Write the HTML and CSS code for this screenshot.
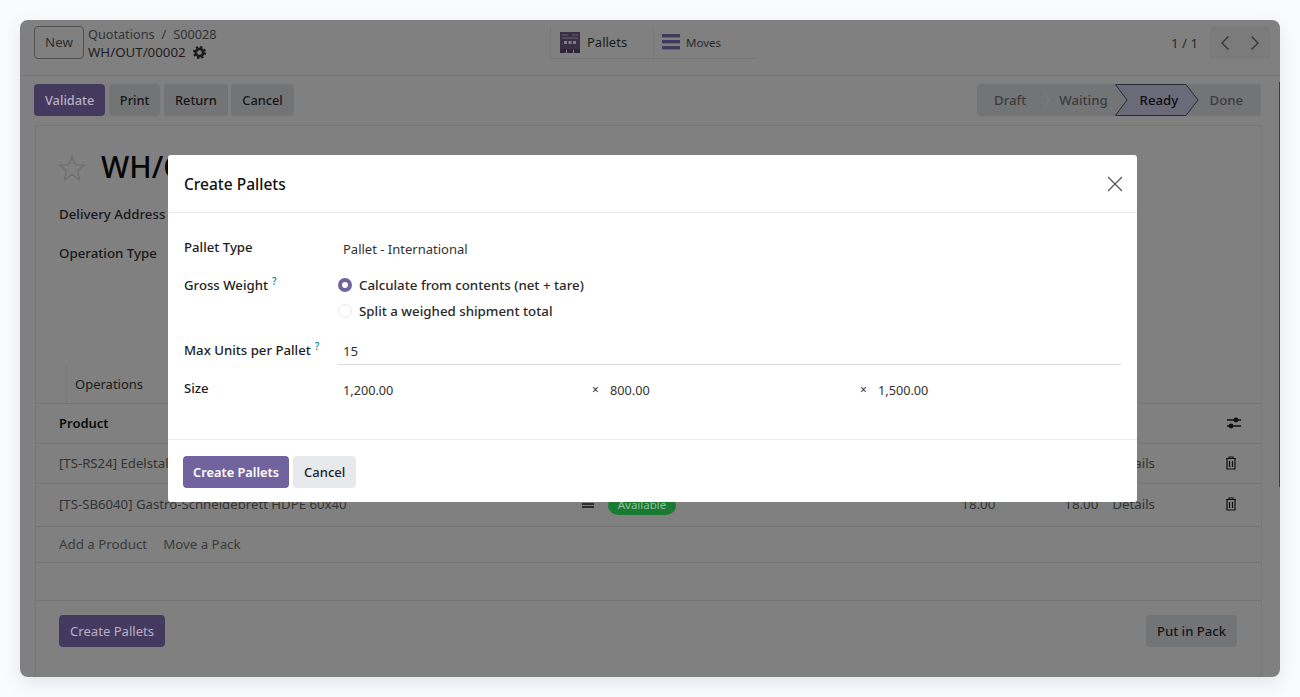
FILE: index.html
```html
<!DOCTYPE html>
<html lang="en">
<head>
    <meta charset="UTF-8">
    <meta name="viewport" content="width=device-width, initial-scale=1.0">
    <title>WH/OUT/00002</title>
    <link rel="stylesheet" href="styles.css">
</head>
<body>

<div class="window">
    <div class="control-top">
        <div class="control-left">
            <div class="btn-new">New</div>
            <div class="crumbs">
                <div class="crumb-path">Quotations<span class="crumb-sep">/</span>S00028</div>
                <div class="crumb-current">WH/OUT/00002
                    <svg class="gear" viewBox="0 0 14 14" width="13" height="13">
                        <circle cx="7" cy="7" r="4" fill="none" stroke="#1c1c1c" stroke-width="3"/>
                        <circle cx="7" cy="7" r="6" fill="none" stroke="#1c1c1c" stroke-width="2.2" stroke-dasharray="2.4 2.31"/>
                    </svg>
                </div>
            </div>
        </div>
        <div class="stat-buttons">
            <div class="stat pallets">
                <svg viewBox="0 0 22 22" width="22" height="22">
                    <rect x="1" y="1" width="20" height="18" fill="#3a2f45"/>
                    <rect x="1" y="18" width="6" height="4" fill="#2e2636"/>
                    <rect x="8" y="18" width="6" height="4" fill="#2e2636"/>
                    <rect x="15" y="18" width="6" height="4" fill="#2e2636"/>
                    <path d="M3 4h6M13 4h6M3 7h16" stroke="#6d6270" stroke-width="1"/>
                    <rect x="5" y="10" width="3" height="3" fill="#85798a"/>
                    <rect x="9.5" y="10" width="3" height="3" fill="#85798a"/>
                    <rect x="14" y="10" width="3" height="3" fill="#85798a"/>
                </svg>
                <span>Pallets</span>
            </div>
            <div class="stat moves">
                <svg viewBox="0 0 18 16" width="18" height="16">
                    <rect y="0" width="18" height="3.4" fill="#3f3a5e"/>
                    <rect y="6" width="18" height="3.4" fill="#3f3a5e"/>
                    <rect y="12" width="18" height="3.4" fill="#3f3a5e"/>
                </svg>
                <span>Moves</span>
            </div>
        </div>
        <div class="pager">
            <span class="pager-count">1 / 1</span>
            <div class="pager-arrows">
                <svg viewBox="0 0 10 16" width="10" height="16"><path d="M8.5 1.5 2 8l6.5 6.5" fill="none" stroke="#333" stroke-width="1.3"/></svg>
                <svg viewBox="0 0 10 16" width="10" height="16"><path d="M1.5 1.5 8 8l-6.5 6.5" fill="none" stroke="#333" stroke-width="1.3"/></svg>
            </div>
        </div>
    </div>

    <div class="control-actions">
        <div class="action-group">
            <div class="btn btn-primary">Validate</div>
            <div class="btn btn-gray">Print</div>
            <div class="btn btn-gray">Return</div>
            <div class="btn btn-gray">Cancel</div>
        </div>
        <div class="statusbar">
            <span class="step step-draft">Draft</span>
            <svg class="step-gap" viewBox="0 0 8 32" width="8" height="32"><path d="M1 6l6 10-6 10" fill="none" stroke="#7b7c7e"/></svg>
            <span class="step step-waiting">Waiting</span>
            <span class="step-ready">
                <svg viewBox="0 0 84 32" width="84" height="32">
                    <path d="M.5.5H71L83 16 71 31.500H.5L12 16z" fill="#6b6a78" stroke="#2c2a38"/>
                </svg>
                <span class="step-ready-text">Ready</span>
            </span>
            <span class="step step-done">Done</span>
        </div>
    </div>

    <div class="sheet">
        <div class="title-row">
            <svg class="star" viewBox="0 0 28 28" width="28" height="28">
                <path d="M14 2.500 17.300 10.800 26 11.400 19.300 17 21.500 25.600 14 20.900 6.500 25.600 8.700 17 2 11.400 10.700 10.800z" fill="none" stroke="#6e6e6e" stroke-width="1.400"/>
            </svg>
            <h1>WH/O</h1>
        </div>
        <div class="field-label address">Delivery Address</div>
        <div class="field-label optype">Operation Type</div>

        <div class="tabs"><div class="tab">Operations</div></div>

        <div class="row row-head">
            <span class="cell-product">Product</span>
            <svg class="cell-end" viewBox="0 0 16 14" width="16" height="14">
                <path d="M1 4h14M1 10h14" stroke="#111" stroke-width="1.500"/>
                <circle cx="10" cy="4" r="2.400" fill="#111"/>
                <circle cx="5" cy="10" r="2.400" fill="#111"/>
            </svg>
        </div>
        <div class="row row-line">
            <span class="cell-product">[TS-RS24] Edelstal</span>
            <span class="cell-details">Details</span>
            <svg class="trash" viewBox="0 0 12 14" width="12" height="14">
                <path d="M4 2V1h4v1M1 2.500h10M2 3v10h8V3M4.500 5v6M7.500 5v6" fill="none" stroke="#111" stroke-width="1.200"/>
            </svg>
        </div>
        <div class="row row-line row-two">
            <span class="cell-product">[TS-SB6040] Gastro-Schneidebrett HDPE 60x40</span>
            <svg class="list-icon" viewBox="0 0 12 10" width="12" height="10"><path d="M0 2h12M0 5h12M0 8h12" stroke="#111" stroke-width="1.500"/></svg>
            <span class="badge">Available</span>
            <span class="qty qty-one">18.00</span>
            <span class="qty qty-two">18.00</span>
            <span class="cell-details">Details</span>
            <svg class="trash" viewBox="0 0 12 14" width="12" height="14">
                <path d="M4 2V1h4v1M1 2.500h10M2 3v10h8V3M4.500 5v6M7.500 5v6" fill="none" stroke="#111" stroke-width="1.200"/>
            </svg>
        </div>
        <div class="row row-add">
            <span>Add a Product</span>
            <span>Move a Pack</span>
        </div>
        <div class="spacer"></div>
        <div class="sheet-footer">
            <div class="btn btn-primary btn-wide">Create Pallets</div>
            <div class="btn btn-gray">Put in Pack</div>
        </div>
    </div>
    <div class="scroll-thumb"></div>
</div>

<div class="modal">
    <div class="modal-header">
        <h2>Create Pallets</h2>
        <svg class="modal-close" viewBox="0 0 16 16" width="16" height="16">
            <path d="M1 1l14 14M15 1 1 15" stroke="#555" stroke-width="1.300"/>
        </svg>
    </div>
    <div class="modal-body">
        <div class="form-row row-type">
            <div class="form-label">Pallet Type</div>
            <div class="form-value">Pallet - International</div>
        </div>
        <div class="form-row row-weight">
            <div class="form-label">Gross Weight<sup>?</sup></div>
            <div class="radios">
                <div class="radio-line"><span class="radio radio-on"></span>Calculate from contents (net + tare)</div>
                <div class="radio-line"><span class="radio"></span>Split a weighed shipment total</div>
            </div>
        </div>
        <div class="form-row row-max">
            <div class="form-label">Max Units per Pallet<sup>?</sup></div>
            <div class="form-input">15</div>
        </div>
        <div class="form-row row-size">
            <div class="form-label">Size</div>
            <div class="size-grid">
                <span>1,200.00</span>
                <span class="times">×</span>
                <span>800.00</span>
                <span class="times">×</span>
                <span>1,500.00</span>
            </div>
        </div>
    </div>
    <div class="modal-footer">
        <div class="btn btn-modal-primary">Create Pallets</div>
        <div class="btn btn-modal-gray">Cancel</div>
    </div>
</div>

</body>
</html>
```

FILE: styles.css
```css
* {
    box-sizing: border-box;
}
body {
    margin: 0;
    height: 697px;
    padding: 20px;
    background-color: #fafbfd;
    color: #1f1f1f;
    font-family: "Noto Sans", "Open Sans", sans-serif;
    font-size: 13.300px;
    overflow: hidden;
    position: relative;
}
.window {
    position: relative;
    height: 657px;
    background-color: #808080;
    border-radius: 8px;
    box-shadow: 0 6px 18px rgba(60, 70, 90, 0.12);
    overflow: hidden;
    display: flex;
    flex-direction: column;
}
.scroll-thumb {
    position: absolute;
    right: 0;
    top: 62px;
    width: 1px;
    height: 405px;
    background-color: #3c3c3c;
}

/* top bar */
.control-top {
    height: 56px;
    flex-shrink: 0;
    padding: 6px 10px 0 14px;
    border-bottom: 1px solid #757575;
    display: grid;
    grid-template-columns: 516px 1fr auto;
}
.control-left {
    display: flex;
    gap: 4px;
    height: 33px;
}
.btn-new {
    width: 50px;
    height: 33px;
    border: 1px solid #505050;
    border-radius: 4px;
    text-align: center;
    line-height: 31px;
    color: #2d2d2d;
}
.crumbs {
    line-height: 17px;
}
.crumb-path {
    font-size: 12.700px;
    color: #333;
}
.crumb-sep {
    margin: 0 7px;
}
.crumb-current {
    margin-top: 1px;
    color: #1e1e1e;
    display: flex;
    align-items: center;
    gap: 7px;
}
.stat-buttons {
    display: flex;
    height: 33px;
}
.stat {
    display: flex;
    align-items: center;
    border-left: 1px solid #777;
    border-bottom: 1px solid #777;
    color: #1c1c1c;
}
.pallets {
    width: 103px;
    padding-left: 8px;
    gap: 6px;
    font-size: 13px;
}
.moves {
    width: 103px;
    padding-left: 8px;
    gap: 6px;
    font-size: 11.500px;
    color: #2b2b2b;
}
.pager {
    display: flex;
    align-items: center;
    height: 33px;
    gap: 12px;
    color: #2a2a2a;
}
.pager-arrows {
    width: 60px;
    height: 33px;
    border-radius: 4px;
    background-color: #7b7b7b;
    display: flex;
    align-items: center;
    justify-content: space-between;
    padding: 0 10px;
}

/* action bar */
.control-actions {
    flex-shrink: 0;
    height: 49px;
    padding: 8px 19px 0 14px;
    display: flex;
    justify-content: space-between;
}
.action-group {
    display: flex;
    gap: 3.500px;
}
.btn {
    height: 32px;
    padding: 0 11px;
    border-radius: 4px;
    font-size: 12.800px;
    line-height: 32px;
    font-weight: 500;
    white-space: nowrap;
}
.btn-primary {
    background-color: #443a60;
    color: #b5b0c4;
}
.btn-gray {
    background-color: #737476;
    color: #161616;
}
.sheet-footer .btn {
    font-size: 13.100px;
}
.btn-wide {
    font-weight: 400;
}
.statusbar {
    width: 284px;
    height: 32px;
    background-color: #737476;
    border-radius: 3px;
    display: flex;
    align-items: center;
    color: #3c3c3e;
    font-weight: 500;
    font-size: 13.200px;
}
.step-draft {
    margin-left: 17px;
}
.step-gap {
    margin-left: 16px;
}
.step-waiting {
    margin-left: 9px;
}
.step-ready {
    position: relative;
    width: 84px;
    height: 32px;
    margin-left: 7px;
    flex-shrink: 0;
}
.step-ready-text {
    position: absolute;
    left: 25px;
    top: 0;
    line-height: 32px;
    color: #0d0d10;
}
.step-done {
    margin-left: 11px;
}

/* sheet */
.sheet {
    flex: 1;
    margin: 0 18px 0 15px;
    border-left: 1px solid #787878;
    border-right: 1px solid #787878;
    border-top: 1px solid #787878;
    display: flex;
    flex-direction: column;
}
.title-row {
    height: 78px;
    padding: 26px 0 0 22px;
    display: flex;
    align-items: flex-start;
    gap: 15px;
}
.title-row h1 {
    margin: 0;
    font-size: 30px;
    line-height: 30px;
    font-weight: 500;
    color: #050505;
    white-space: nowrap;
}
.star {
    flex-shrink: 0;
    margin-top: 2px;
}
.field-label {
    padding-left: 23px;
    font-weight: 500;
    color: #181818;
    line-height: 20px;
}
.optype {
    margin-top: 19px;
}
.tabs {
    height: 39px;
    margin-top: 102px;
    padding-left: 30px;
    border-bottom: 1px solid #757575;
}
.tab {
    width: 100px;
    height: 39px;
    padding-left: 8px;
    font-size: 13px;
    line-height: 38px;
    color: #1c1c1c;
    border-left: 1px solid #787878;
}
.row {
    display: flex;
    align-items: center;
    padding-left: 23px;
    position: relative;
    border-bottom: 1px solid #757575;
}
.row-head {
    height: 40px;
    padding-bottom: 2px;
    font-size: 13px;
    font-weight: 600;
    color: #0b0b0b;
}
.row-line {
    height: 40px;
    padding-bottom: 2px;
    color: #333;
}
.row-two {
    height: 43px;
    padding-bottom: 3px;
}
.row-line .cell-product {
    font-size: 13.200px;
}
.row-two .cell-product {
    width: 523px;
}
.cell-product {
    white-space: nowrap;
}
.cell-end {
    margin-left: auto;
    margin-right: 19px;
}
.row-line .cell-details {
    margin-left: auto;
    margin-right: 70px;
}
.trash {
    margin-right: 24px;
}
.row-two .badge {
    margin: 2px 0 0 14px;
    height: 20px;
    width: 68px;
    border-radius: 10px;
    background-color: #1a7a32;
    color: #8fc09c;
    font-size: 11.500px;
    line-height: 20px;
    text-align: center;
}
.row-two .qty-one {
    margin-left: auto;
}
.row-two .qty-two {
    margin-left: 69px;
}
.row-two .cell-details {
    margin-left: 14px;
}
.row-add {
    height: 36px;
    padding-bottom: 1px;
    gap: 16px;
    color: #3b3b3b;
}
.spacer {
    height: 38px;
    border-bottom: 1px solid #757575;
}
.sheet-footer {
    padding: 14px 24px 0 23px;
    display: flex;
    justify-content: space-between;
}

/* dialog over the page */
.modal {
    position: absolute;
    left: 168px;
    top: 155px;
    width: 969px;
    height: 347px;
    background-color: #fff;
    border-radius: 3px;
    display: flex;
    flex-direction: column;
}
.modal-header {
    height: 58px;
    padding: 0 14px 0 16px;
    border-bottom: 1px solid #e8eaed;
    display: flex;
    align-items: center;
    justify-content: space-between;
}
.modal-header h2 {
    margin: 0;
    font-size: 15.500px;
    font-weight: 500;
    color: #111;
}
.modal-body {
    height: 227px;
    padding: 0 16px;
    border-bottom: 1px solid #e8eaed;
}
.form-row {
    display: grid;
    grid-template-columns: 154px 1fr;
}
.form-label {
    font-size: 13.200px;
    font-weight: 500;
    color: #1d1d1d;
    white-space: nowrap;
    line-height: 20px;
}
.form-label sup {
    margin-left: 4px;
    font-size: 10px;
    line-height: 0;
    color: #017e84;
}
.row-type {
    padding-top: 24px;
}
.form-value {
    padding: 2px 0 0 5px;
    font-size: 13px;
    color: #333;
    line-height: 20px;
}
.row-weight {
    padding-top: 16px;
}
.radios {
    display: flex;
    flex-direction: column;
    gap: 6px;
}
.radio-line {
    display: flex;
    align-items: center;
    gap: 7px;
    line-height: 20px;
    font-weight: 500;
    color: #2a2a2a;
}
.radio {
    width: 14px;
    height: 14px;
    border-radius: 50%;
    border: 1px solid #e6e8eb;
    background-color: #fff;
}
.radio-on {
    border: 4px solid #71639e;
}
.row-max {
    padding-top: 17px;
}
.row-max .form-label {
    padding-top: 2px;
}
.form-input {
    height: 27px;
    padding: 3px 0 0 5px;
    line-height: 20px;
    color: #333;
    border-bottom: 1px solid #d8dadd;
}
.row-size {
    padding-top: 13px;
}
.size-grid {
    display: grid;
    grid-template-columns: 249px 18px 250px 18px 1fr;
    padding: 2px 0 0 5px;
    font-size: 12.700px;
    line-height: 20px;
    color: #333;
}
.times {
    font-size: 12px;
}
.modal-footer {
    padding: 16px 15px 0;
    display: flex;
    gap: 4px;
}
.btn-modal-primary {
    padding: 0 10px;
    background-color: #71639e;
    color: #fff;
    font-weight: 600;
}
.btn-modal-gray {
    background-color: #e7e9ed;
    color: #1f2429;
    font-size: 13px;
}
```
